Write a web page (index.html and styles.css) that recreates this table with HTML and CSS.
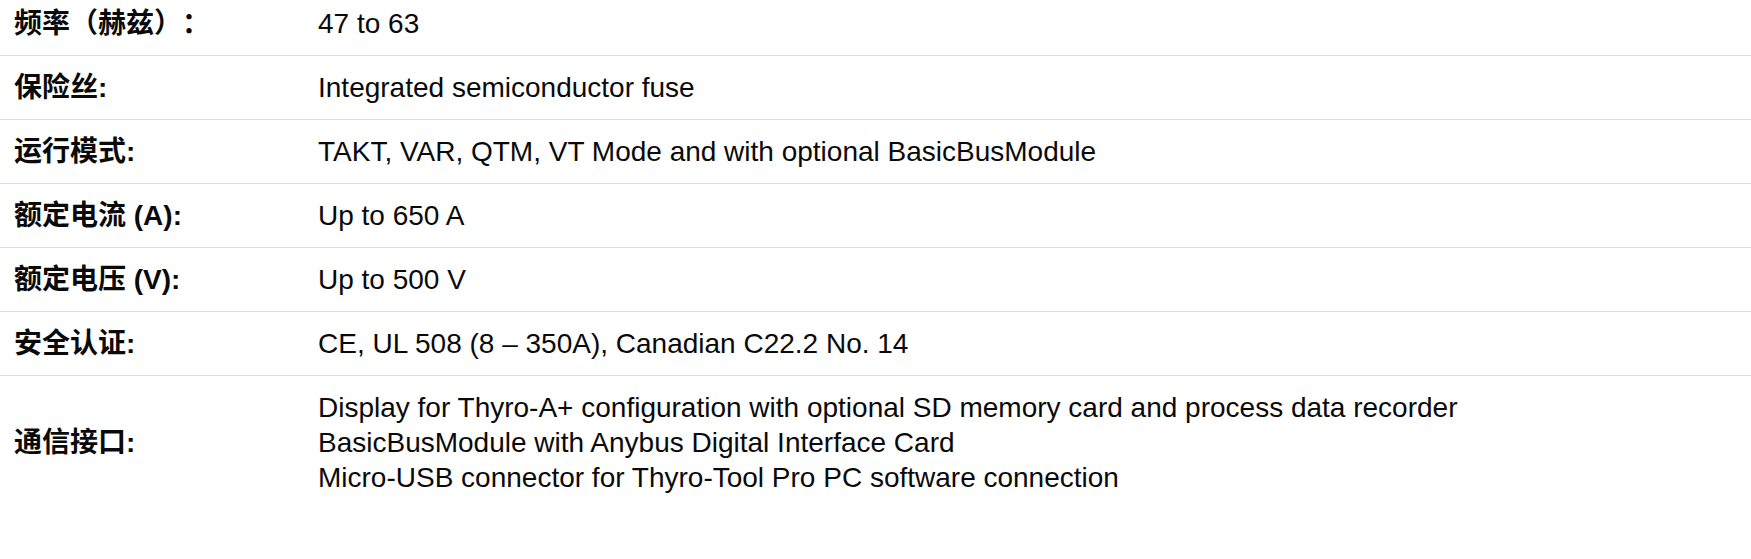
FILE: index.html
```html
<!DOCTYPE html>
<html lang="zh">
<head>
<meta charset="utf-8">
<title>Specs</title>
<link rel="stylesheet" href="styles.css">
</head>
<body>
<div class="specs">
  <div class="row first">
    <div class="label">频率（赫兹）：</div>
    <div class="value">47 to 63</div>
  </div>
  <div class="row">
    <div class="label">保险丝:</div>
    <div class="value">Integrated semiconductor fuse</div>
  </div>
  <div class="row">
    <div class="label">运行模式:</div>
    <div class="value">TAKT, VAR, QTM, VT Mode and with optional BasicBusModule</div>
  </div>
  <div class="row">
    <div class="label">额定电流 (A):</div>
    <div class="value">Up to 650 A</div>
  </div>
  <div class="row">
    <div class="label">额定电压 (V):</div>
    <div class="value">Up to 500 V</div>
  </div>
  <div class="row">
    <div class="label">安全认证:</div>
    <div class="value">CE, UL 508 (8 – 350A), Canadian C22.2 No. 14</div>
  </div>
  <div class="row last">
    <div class="label">通信接口:</div>
    <div class="value">Display for Thyro-A+ configuration with optional SD memory card and process data recorder<br>BasicBusModule with Anybus Digital Interface Card<br>Micro-USB connector for Thyro-Tool Pro PC software connection</div>
  </div>
</div>
</body>
</html>
```
FILE: styles.css
```css
html, body {
  margin: 0;
  padding: 0;
  background: #ffffff;
}

body {
  font-family: "Liberation Sans", Arial, "Noto Sans CJK SC", sans-serif;
  font-size: 28px;
  line-height: 35px;
  color: #0a0a0a;
  text-spacing-trim: space-all;
}

.specs {
  display: flex;
  flex-direction: column;
}

.row {
  display: grid;
  grid-template-columns: 304px 1fr;
  align-items: center;
  border-bottom: 1px solid #d6dde5;
}

.row.last {
  border-bottom: none;
}

.label,
.value {
  padding: 14px;
}

.row.first .label,
.row.first .value {
  padding-top: 6px;
}

.label {
  font-weight: bold;
}

.value {
  font-weight: normal;
}
```
